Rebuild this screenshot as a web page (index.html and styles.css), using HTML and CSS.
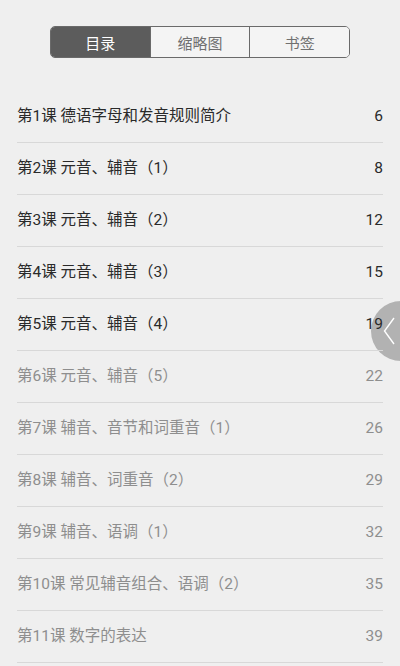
FILE: index.html
```html
<html>
	<head>
		<meta name="viewport" content="width=device-width, initial-scale=1">
		<title>目录</title>
		<link rel="stylesheet" href="styles.css">
	</head>
	<body>
		<div class="tabs">
			<div class="tab active">目录</div>
			<div class="tab">缩略图</div>
			<div class="tab">书签</div>
		</div>
		<div class="list">
			<div class="item"><span>第1课 德语字母和发音规则简介</span><span>6</span></div>
			<div class="item"><span>第2课 元音、辅音（1）</span><span>8</span></div>
			<div class="item"><span>第3课 元音、辅音（2）</span><span>12</span></div>
			<div class="item"><span>第4课 元音、辅音（3）</span><span>15</span></div>
			<div class="item"><span>第5课 元音、辅音（4）</span><span>19</span></div>
			<div class="item dim"><span>第6课 元音、辅音（5）</span><span>22</span></div>
			<div class="item dim"><span>第7课 辅音、音节和词重音（1）</span><span>26</span></div>
			<div class="item dim"><span>第8课 辅音、词重音（2）</span><span>29</span></div>
			<div class="item dim"><span>第9课 辅音、语调（1）</span><span>32</span></div>
			<div class="item dim"><span>第10课 常见辅音组合、语调（2）</span><span>35</span></div>
			<div class="item dim"><span>第11课 数字的表达</span><span>39</span></div>
		</div>
		<div class="side-tab">
			<svg width="12" height="28" viewBox="0 0 12 28"><path d="M11 1 L1.5 14 L11 27" fill="none" stroke="#fff" stroke-width="1.4"/></svg>
		</div>
	</body>
</html>
```

FILE: styles.css
```css
body {
	margin: 0;
	background: #efefef;
	font-family: Roboto, "Noto Sans CJK SC", sans-serif;
	overflow: hidden;
}

.tabs {
	display: flex;
	width: 298px;
	height: 30px;
	margin: 26px auto 0 auto;
	border: 1px solid #6a6a6a;
	border-radius: 5px;
	overflow: hidden;
}

.tab {
	flex: 1;
	display: flex;
	align-items: center;
	justify-content: center;
	font-size: 15px;
	color: #707070;
	background: #f4f4f4;
	border-left: 1px solid #6a6a6a;
}

.tab:first-child {
	border-left: none;
}

.tab.active {
	background: #5c5c5c;
	color: #fff;
}

.list {
	position: relative;
	z-index: 1;
	margin-top: 33px;
	padding: 0 17px;
}

.item {
	display: flex;
	justify-content: space-between;
	align-items: baseline;
	height: 51px;
	line-height: 51px;
	border-bottom: 1px solid #d8d8d8;
	font-size: 15.5px;
	color: #2a2a2a;
}

.item.dim {
	color: #8e8e8e;
}

.side-tab {
	position: absolute;
	z-index: 0;
	left: 371px;
	top: 301px;
	width: 60px;
	height: 60px;
	border-radius: 50%;
	background: #b2b2b2;
	display: flex;
	align-items: center;
	padding-left: 12px;
	box-sizing: border-box;
}

.side-tab svg {
	position: relative;
	z-index: 2;
}
```
